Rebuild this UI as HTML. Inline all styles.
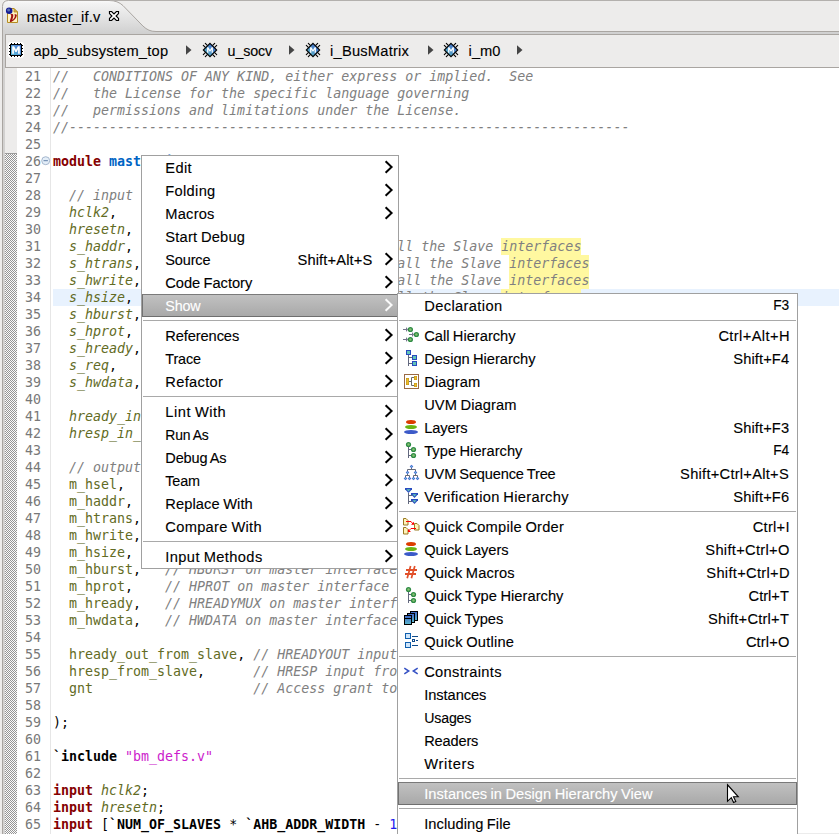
<!DOCTYPE html>
<html lang="en"><head><meta charset="utf-8"><title>master_if.v</title>
<style>
*{box-sizing:border-box}
html,body{margin:0;padding:0}
html,body{width:839px;height:834px;overflow:hidden}
#root{position:absolute;left:0;top:0;width:839px;height:834px;overflow:hidden;background:#edeceb}
body{background:#edeceb;font-family:"Liberation Sans","DejaVu Sans",sans-serif;font-size:14.667px;color:#111}
.t{position:absolute;word-spacing:-0.7px;line-height:20px;height:20px;white-space:pre;color:#000;-webkit-text-stroke:0.12px #000}
.t.w{color:#fff;-webkit-text-stroke:0.12px #fff}
#tabsvg{position:absolute;left:0;top:0}
#crumb{position:absolute;left:5px;top:34px;width:840px;height:34px;background:#edeceb;border:1px solid #a9a5a1;border-right:0}
#ed{position:absolute;left:0;top:68px;width:839px;height:766px;background:#fff;overflow:hidden}
#lb{position:absolute;left:0;top:30px;width:5px;height:810px;background:linear-gradient(90deg,#edeceb 0,#edeceb 2px,#a9a5a1 2px,#a9a5a1 3px,#d2d1d0 3px,#d2d1d0 5px)}
#ruler{position:absolute;left:5px;top:68px;width:12px;height:766px;background:#edeceb}
#hatch{position:absolute;left:5px;top:153px;width:12px;height:700px;border-top:1px solid #9c9c9c;background-image:repeating-conic-gradient(#fbfbfb 0% 25%,#959595 0% 50%);background-size:2px 2px;background-position:0 1px}
#vl{position:absolute;left:50px;top:68px;width:1px;height:766px;background:#e6e6e6}
.num,.ln{position:absolute;font-family:"DejaVu Sans Mono","Liberation Mono",monospace;font-size:13.314px;line-height:17px;height:17px;white-space:pre}
.num{left:17px;width:24px;text-align:right;color:#787878}
.ln{left:53px;color:#000}
.ln.cur{left:53px;width:800px;background:#e8f2fe}
.c{color:#808080;font-style:italic}
.h{background:#fff8a0;display:inline-block;height:17px;line-height:17px;vertical-align:top}
.k{color:#850000;font-weight:bold}
.n{color:#0064c4;font-weight:bold}
.i{color:#626b24;font-style:italic}
.o{color:#626b24}
.s{color:#cc1ccc}
.d{color:#000;font-weight:bold}
.u{color:#1c1cf0}
.menu{position:absolute;background:#fff;border:1px solid #a0a0a0}
#m1{left:141px;top:155px;width:258px;height:414px}
#m2{left:397px;top:293px;width:401px;height:560px}
.ar{position:absolute;left:242px}
.sel{position:absolute;left:0;right:0;height:23px;background:linear-gradient(#c1c1c1,#b6b6b6 45%,#a9a9a9);border:1px solid #727272;border-top-color:#7a7a7a;border-bottom-color:#6e6e6e}
.sep{position:absolute;left:1px;right:1px;height:1px;background:#a9a9a9}
.ic{position:absolute}
</style></head>
<body>
<div id="root">
<svg id="tabsvg" width="839" height="35" viewBox="0 0 839 35">
<defs><linearGradient id="tg" x1="0" y1="0" x2="0" y2="1"><stop offset="0" stop-color="#fbfbfb"/><stop offset="0.08" stop-color="#f3f3f3"/><stop offset="0.5" stop-color="#e3e3e3"/><stop offset="1" stop-color="#cecece"/></linearGradient></defs>
<rect x="0" y="0" width="839" height="35" fill="#edeceb"/>
<path d="M2.5 35 L2.5 6.5 Q2.5 0.5 8.5 0.5 L109 0.5 C115 0.5 119.5 2.3 123 5.6 L143 26.1 C147 29.8 150.5 31.5 156 31.5 L839 31.5 L839 34 L2.5 34 Z" fill="url(#tg)"/>
<path d="M2.5 35 L2.5 6.5 Q2.5 0.5 8.5 0.5 L109 0.5 C115 0.5 119.5 2.3 123 5.6 L143 26.1 C147 29.8 150.5 31.5 156 31.5 L839 31.5" fill="none" stroke="#aaa6a2" stroke-width="1"/>
<rect x="110" y="0" width="729" height="1" fill="#b3b0ad"/>
<rect x="3" y="34" width="836" height="1" fill="#a9a5a1"/>
</svg>
<div id="crumb"></div>
<div id="ed"></div>
<div id="lb"></div>
<div id="ruler"></div><div id="hatch"></div><div id="vl"></div>
<svg style="position:absolute;left:5px;top:6px" width="16" height="19" viewBox="0 0 16 19">
<path d="M2.500 2.500h6.500l3.500 3.500v10.500h-10z" fill="#fff3c0" stroke="#b48c22"/>
<path d="M9 2.500v3.500h3.500z" fill="#d8b050" stroke="#b48c22" stroke-width="0.800"/>
<path d="M5.400 8.400c1.500-0.700 2.900-0.300 2.900 1.100c0 1.500-0.700 3.200-1 4.600c1.300-1 2.400-2.600 2.600-4.200c0.100-0.600-0.200-1-0.800-1.200c1-0.900 2.800-0.600 2.700 0.900c-0.300 2.500-2.800 5.200-5.600 6.300c-1 0.300-1.500-0.100-1.300-1c0.400-1.800 1.300-3.700 1.300-5.200c0-0.600-0.300-1-0.800-1.300z" fill="#a01010"/>
<circle cx="4.200" cy="4.700" r="3.300" fill="#141c96"/><circle cx="3.600" cy="4.100" r="1.500" fill="#5a72b0"/>
</svg><svg style="position:absolute;left:108px;top:10px" width="12" height="12" viewBox="0 0 12 12">
<path d="M1.500 1.500H3.600L6 3.900L8.400 1.500H10.500V3.600L8.100 6L10.500 8.400V10.500H8.400L6 8.100L3.600 10.500H1.500V8.400L3.900 6L1.500 3.600Z" fill="#fff" stroke="#000" stroke-width="1.200" stroke-linejoin="miter"/></svg>
<svg style="position:absolute;left:8px;top:42px" width="16" height="16" viewBox="0 0 16 16">
<defs><linearGradient id="cg" x1="1" y1="0" x2="0" y2="1"><stop offset="0" stop-color="#4a72d0"/><stop offset="1" stop-color="#5cc0dc"/></linearGradient></defs>
<rect x="0" y="0" width="16" height="16" rx="3" fill="#fff"/>
<g stroke="#000" stroke-width="1"><path d="M3.500 1v14M6.500 1v14M9.500 1v14M12.500 1v14M1 3.500h14M1 6.500h14M1 9.500h14M1 12.500h14"/></g>
<rect x="2.500" y="2.500" width="11" height="11" fill="url(#cg)" stroke="#000"/>
<path d="M4.200 11.700v-7.400h1.900l1.900 3.500l1.900-3.500h1.900v7.400h-1.700v-4.500l-1.500 2.700h-1.200l-1.500-2.700v4.500z" fill="#fff"/>
</svg><svg style="position:absolute;left:185px;top:44px" width="8" height="12" viewBox="0 0 8 12"><path d="M1 1.300L6.500 6L1 10.700Z" fill="#454545"/></svg><svg style="position:absolute;left:202px;top:42px" width="16" height="16" viewBox="0 0 16 16">
<defs><linearGradient id="ig" x1="1" y1="0" x2="0" y2="1"><stop offset="0" stop-color="#3c5cc8"/><stop offset="1" stop-color="#62c4c8"/></linearGradient></defs>
<g stroke="#000" stroke-width="1.100" stroke-linecap="round"><path d="M3.300 1.300l2 2M1.300 3.300l2 2M12.700 1.300l-2 2M14.700 3.300l-2 2M3.300 14.700l2-2M1.300 12.700l2-2M12.700 14.700l-2-2M14.700 12.700l-2-2"/></g>
<path d="M8 1.300L14.700 8L8 14.700L1.300 8Z" fill="url(#ig)" stroke="#000" stroke-width="1.100"/>
<path d="M5.100 10.800v-5.500h1.300l1.600 2.800l1.600-2.800h1.300v5.500h-1.300v-3.300l-1.200 2.100h-0.800l-1.200-2.100v3.300z" fill="#fff"/>
</svg><svg style="position:absolute;left:288px;top:44px" width="8" height="12" viewBox="0 0 8 12"><path d="M1 1.300L6.500 6L1 10.700Z" fill="#454545"/></svg><svg style="position:absolute;left:305px;top:42px" width="16" height="16" viewBox="0 0 16 16">
<defs><linearGradient id="ig" x1="1" y1="0" x2="0" y2="1"><stop offset="0" stop-color="#3c5cc8"/><stop offset="1" stop-color="#62c4c8"/></linearGradient></defs>
<g stroke="#000" stroke-width="1.100" stroke-linecap="round"><path d="M3.300 1.300l2 2M1.300 3.300l2 2M12.700 1.300l-2 2M14.700 3.300l-2 2M3.300 14.700l2-2M1.300 12.700l2-2M12.700 14.700l-2-2M14.700 12.700l-2-2"/></g>
<path d="M8 1.300L14.700 8L8 14.700L1.300 8Z" fill="url(#ig)" stroke="#000" stroke-width="1.100"/>
<path d="M5.100 10.800v-5.500h1.300l1.600 2.800l1.600-2.800h1.300v5.500h-1.300v-3.300l-1.200 2.100h-0.800l-1.200-2.100v3.300z" fill="#fff"/>
</svg><svg style="position:absolute;left:427px;top:44px" width="8" height="12" viewBox="0 0 8 12"><path d="M1 1.300L6.500 6L1 10.700Z" fill="#454545"/></svg><svg style="position:absolute;left:443px;top:42px" width="16" height="16" viewBox="0 0 16 16">
<defs><linearGradient id="ig" x1="1" y1="0" x2="0" y2="1"><stop offset="0" stop-color="#3c5cc8"/><stop offset="1" stop-color="#62c4c8"/></linearGradient></defs>
<g stroke="#000" stroke-width="1.100" stroke-linecap="round"><path d="M3.300 1.300l2 2M1.300 3.300l2 2M12.700 1.300l-2 2M14.700 3.300l-2 2M3.300 14.700l2-2M1.300 12.700l2-2M12.700 14.700l-2-2M14.700 12.700l-2-2"/></g>
<path d="M8 1.300L14.700 8L8 14.700L1.300 8Z" fill="url(#ig)" stroke="#000" stroke-width="1.100"/>
<path d="M5.100 10.800v-5.500h1.300l1.600 2.800l1.600-2.800h1.300v5.500h-1.300v-3.300l-1.200 2.100h-0.800l-1.200-2.100v3.300z" fill="#fff"/>
</svg><svg style="position:absolute;left:516px;top:44px" width="8" height="12" viewBox="0 0 8 12"><path d="M1 1.300L6.500 6L1 10.700Z" fill="#454545"/></svg>
<span class="t" style="left:26.70px;top:7px;letter-spacing:0.206px">master_if.v</span><span class="t" style="left:33.40px;top:41px;letter-spacing:0.217px">apb_subsystem_top</span><span class="t" style="left:227.60px;top:41px;font-size:14.306px;letter-spacing:-0.150px">u_socv</span><span class="t" style="left:330.10px;top:41px;letter-spacing:0.217px">i_BusMatrix</span><span class="t" style="left:468.60px;top:41px;letter-spacing:0.028px">i_m0</span>
<div class="num" style="top:68px">21</div>
<div class="ln" style="top:68px"><span class="c">//   CONDITIONS OF ANY KIND, either express or implied.  See</span></div>
<div class="num" style="top:85px">22</div>
<div class="ln" style="top:85px"><span class="c">//   the License for the specific language governing</span></div>
<div class="num" style="top:102px">23</div>
<div class="ln" style="top:102px"><span class="c">//   permissions and limitations under the License.</span></div>
<div class="num" style="top:119px">24</div>
<div class="ln" style="top:119px"><span class="c">//----------------------------------------------------------------------</span></div>
<div class="num" style="top:136px">25</div>
<div class="ln" style="top:136px"></div>
<div class="num" style="top:153px">26</div>
<div class="ln" style="top:153px"><span class="k">module</span><span class="p"> </span><span class="n">master_if</span><span class="p"> (</span></div>
<div class="num" style="top:170px">27</div>
<div class="ln" style="top:170px"></div>
<div class="num" style="top:187px">28</div>
<div class="ln" style="top:187px"><span class="p">  </span><span class="c">// input</span></div>
<div class="num" style="top:204px">29</div>
<div class="ln" style="top:204px"><span class="p">  </span><span class="i">hclk2</span><span class="p">,</span></div>
<div class="num" style="top:221px">30</div>
<div class="ln" style="top:221px"><span class="p">  </span><span class="i">hresetn</span><span class="p">,</span></div>
<div class="num" style="top:238px">31</div>
<div class="ln" style="top:238px"><span class="p">  </span><span class="i">s_haddr</span><span class="p">,                                </span><span class="c">all the Slave </span><span class="c h">interfaces</span></div>
<div class="num" style="top:255px">32</div>
<div class="ln" style="top:255px"><span class="p">  </span><span class="i">s_htrans</span><span class="p">,                                </span><span class="c">all the Slave </span><span class="c h">interfaces</span></div>
<div class="num" style="top:272px">33</div>
<div class="ln" style="top:272px"><span class="p">  </span><span class="i">s_hwrite</span><span class="p">,                                </span><span class="c">all the Slave </span><span class="c h">interfaces</span></div>
<div class="num" style="top:289px">34</div>
<div class="ln cur" style="top:289px"><span class="p">  </span><span class="i">s_hsize</span><span class="p">,                                </span><span class="c">all the Slave </span><span class="c h">interfaces</span></div>
<div class="num" style="top:306px">35</div>
<div class="ln" style="top:306px"><span class="p">  </span><span class="i">s_hburst</span><span class="p">,</span></div>
<div class="num" style="top:323px">36</div>
<div class="ln" style="top:323px"><span class="p">  </span><span class="i">s_hprot</span><span class="p">,</span></div>
<div class="num" style="top:340px">37</div>
<div class="ln" style="top:340px"><span class="p">  </span><span class="i">s_hready</span><span class="p">,</span></div>
<div class="num" style="top:357px">38</div>
<div class="ln" style="top:357px"><span class="p">  </span><span class="i">s_req</span><span class="p">,</span></div>
<div class="num" style="top:374px">39</div>
<div class="ln" style="top:374px"><span class="p">  </span><span class="i">s_hwdata</span><span class="p">,</span></div>
<div class="num" style="top:391px">40</div>
<div class="ln" style="top:391px"></div>
<div class="num" style="top:408px">41</div>
<div class="ln" style="top:408px"><span class="p">  </span><span class="i">hready_in</span></div>
<div class="num" style="top:425px">42</div>
<div class="ln" style="top:425px"><span class="p">  </span><span class="i">hresp_in_</span></div>
<div class="num" style="top:442px">43</div>
<div class="ln" style="top:442px"></div>
<div class="num" style="top:459px">44</div>
<div class="ln" style="top:459px"><span class="p">  </span><span class="c">// output</span></div>
<div class="num" style="top:476px">45</div>
<div class="ln" style="top:476px"><span class="p">  </span><span class="o">m_hsel</span><span class="p">,</span></div>
<div class="num" style="top:493px">46</div>
<div class="ln" style="top:493px"><span class="p">  </span><span class="o">m_haddr</span><span class="p">,</span></div>
<div class="num" style="top:510px">47</div>
<div class="ln" style="top:510px"><span class="p">  </span><span class="o">m_htrans</span><span class="p">,</span></div>
<div class="num" style="top:527px">48</div>
<div class="ln" style="top:527px"><span class="p">  </span><span class="o">m_hwrite</span><span class="p">,</span></div>
<div class="num" style="top:544px">49</div>
<div class="ln" style="top:544px"><span class="p">  </span><span class="o">m_hsize</span><span class="p">,</span></div>
<div class="num" style="top:561px">50</div>
<div class="ln" style="top:561px"><span class="p">  </span><span class="o">m_hburst</span><span class="p">,   </span><span class="c">// HBURST on master interface</span></div>
<div class="num" style="top:578px">51</div>
<div class="ln" style="top:578px"><span class="p">  </span><span class="o">m_hprot</span><span class="p">,    </span><span class="c">// HPROT on master interface</span></div>
<div class="num" style="top:595px">52</div>
<div class="ln" style="top:595px"><span class="p">  </span><span class="o">m_hready</span><span class="p">,   </span><span class="c">// HREADYMUX on master interface</span></div>
<div class="num" style="top:612px">53</div>
<div class="ln" style="top:612px"><span class="p">  </span><span class="o">m_hwdata</span><span class="p">,   </span><span class="c">// HWDATA on master interface</span></div>
<div class="num" style="top:629px">54</div>
<div class="ln" style="top:629px"></div>
<div class="num" style="top:646px">55</div>
<div class="ln" style="top:646px"><span class="p">  </span><span class="o">hready_out_from_slave</span><span class="p">, </span><span class="c">// HREADYOUT input</span></div>
<div class="num" style="top:663px">56</div>
<div class="ln" style="top:663px"><span class="p">  </span><span class="o">hresp_from_slave</span><span class="p">,      </span><span class="c">// HRESP input from</span></div>
<div class="num" style="top:680px">57</div>
<div class="ln" style="top:680px"><span class="p">  </span><span class="o">gnt</span><span class="p">                    </span><span class="c">// Access grant to</span></div>
<div class="num" style="top:697px">58</div>
<div class="ln" style="top:697px"></div>
<div class="num" style="top:714px">59</div>
<div class="ln" style="top:714px"><span class="p">);</span></div>
<div class="num" style="top:731px">60</div>
<div class="ln" style="top:731px"></div>
<div class="num" style="top:748px">61</div>
<div class="ln" style="top:748px"><span class="d">`include</span><span class="p"> </span><span class="s">"bm_defs.v"</span></div>
<div class="num" style="top:765px">62</div>
<div class="ln" style="top:765px"></div>
<div class="num" style="top:782px">63</div>
<div class="ln" style="top:782px"><span class="k">input</span><span class="p"> </span><span class="i">hclk2</span><span class="p">;</span></div>
<div class="num" style="top:799px">64</div>
<div class="ln" style="top:799px"><span class="k">input</span><span class="p"> </span><span class="i">hresetn</span><span class="p">;</span></div>
<div class="num" style="top:816px">65</div>
<div class="ln" style="top:816px"><span class="k">input</span><span class="p"> [</span><span class="d">`NUM_OF_SLAVES</span><span class="p"> * </span><span class="d">`AHB_ADDR_WIDTH</span><span class="p"> - </span><span class="u">1</span></div>
<svg style="position:absolute;left:41px;top:156px" width="10" height="10" viewBox="0 0 10 10"><circle cx="4.700" cy="4.700" r="4" fill="#e4eef8" stroke="#9db0c8" stroke-width="0.900"/><path d="M2.500 4.700h4.400" stroke="#6080a8" stroke-width="1"/></svg>
<div class="menu" id="m1">
<span class="t" style="left:23.30px;top:2px;letter-spacing:0.339px">Edit</span>
<svg class="ar" style="top:4px" width="10" height="14" viewBox="0 0 10 14"><path d="M1.6 1.2 L7.6 7 L1.6 12.8" fill="none" stroke="#000" stroke-width="2"/></svg>
<span class="t" style="left:23.30px;top:25px;letter-spacing:0.314px">Folding</span>
<svg class="ar" style="top:27px" width="10" height="14" viewBox="0 0 10 14"><path d="M1.6 1.2 L7.6 7 L1.6 12.8" fill="none" stroke="#000" stroke-width="2"/></svg>
<span class="t" style="left:23.30px;top:48px;letter-spacing:0.216px">Macros</span>
<svg class="ar" style="top:50px" width="10" height="14" viewBox="0 0 10 14"><path d="M1.6 1.2 L7.6 7 L1.6 12.8" fill="none" stroke="#000" stroke-width="2"/></svg>
<span class="t" style="left:23.30px;top:71px;letter-spacing:0.214px">Start Debug</span>
<span class="t" style="left:23.30px;top:94px;font-size:14.529px;letter-spacing:-0.150px">Source</span>
<span class="t" style="left:155.50px;top:94px;letter-spacing:0.145px">Shift+Alt+S</span>
<svg class="ar" style="top:96px" width="10" height="14" viewBox="0 0 10 14"><path d="M1.6 1.2 L7.6 7 L1.6 12.8" fill="none" stroke="#000" stroke-width="2"/></svg>
<span class="t" style="left:23.30px;top:117px;letter-spacing:-0.031px">Code Factory</span>
<svg class="ar" style="top:119px" width="10" height="14" viewBox="0 0 10 14"><path d="M1.6 1.2 L7.6 7 L1.6 12.8" fill="none" stroke="#000" stroke-width="2"/></svg>
<div class="sel" style="top:138px"></div>
<span class="t w" style="left:23.30px;top:140px;font-size:14.340px;letter-spacing:-0.150px">Show</span>
<svg class="ar" style="top:142px" width="10" height="14" viewBox="0 0 10 14"><path d="M1.6 1.2 L7.6 7 L1.6 12.8" fill="none" stroke="#fafafa" stroke-width="2"/></svg>
<div class="sep" style="top:164px"></div>
<span class="t" style="left:23.30px;top:170px;letter-spacing:-0.113px">References</span>
<svg class="ar" style="top:172px" width="10" height="14" viewBox="0 0 10 14"><path d="M1.6 1.2 L7.6 7 L1.6 12.8" fill="none" stroke="#000" stroke-width="2"/></svg>
<span class="t" style="left:23.30px;top:193px;font-size:14.400px;letter-spacing:-0.150px">Trace</span>
<svg class="ar" style="top:195px" width="10" height="14" viewBox="0 0 10 14"><path d="M1.6 1.2 L7.6 7 L1.6 12.8" fill="none" stroke="#000" stroke-width="2"/></svg>
<span class="t" style="left:23.30px;top:216px;letter-spacing:0.327px">Refactor</span>
<svg class="ar" style="top:218px" width="10" height="14" viewBox="0 0 10 14"><path d="M1.6 1.2 L7.6 7 L1.6 12.8" fill="none" stroke="#000" stroke-width="2"/></svg>
<div class="sep" style="top:240px"></div>
<span class="t" style="left:23.30px;top:246px;letter-spacing:0.517px">Lint With</span>
<svg class="ar" style="top:248px" width="10" height="14" viewBox="0 0 10 14"><path d="M1.6 1.2 L7.6 7 L1.6 12.8" fill="none" stroke="#000" stroke-width="2"/></svg>
<span class="t" style="left:23.30px;top:269px;font-size:13.934px;letter-spacing:-0.150px">Run As</span>
<svg class="ar" style="top:271px" width="10" height="14" viewBox="0 0 10 14"><path d="M1.6 1.2 L7.6 7 L1.6 12.8" fill="none" stroke="#000" stroke-width="2"/></svg>
<span class="t" style="left:23.30px;top:292px;font-size:14.556px;letter-spacing:-0.150px">Debug As</span>
<svg class="ar" style="top:294px" width="10" height="14" viewBox="0 0 10 14"><path d="M1.6 1.2 L7.6 7 L1.6 12.8" fill="none" stroke="#000" stroke-width="2"/></svg>
<span class="t" style="left:23.30px;top:315px;font-size:14.428px;letter-spacing:-0.150px">Team</span>
<svg class="ar" style="top:317px" width="10" height="14" viewBox="0 0 10 14"><path d="M1.6 1.2 L7.6 7 L1.6 12.8" fill="none" stroke="#000" stroke-width="2"/></svg>
<span class="t" style="left:23.30px;top:338px;letter-spacing:0.090px">Replace With</span>
<svg class="ar" style="top:340px" width="10" height="14" viewBox="0 0 10 14"><path d="M1.6 1.2 L7.6 7 L1.6 12.8" fill="none" stroke="#000" stroke-width="2"/></svg>
<span class="t" style="left:23.30px;top:361px;letter-spacing:0.308px">Compare With</span>
<svg class="ar" style="top:363px" width="10" height="14" viewBox="0 0 10 14"><path d="M1.6 1.2 L7.6 7 L1.6 12.8" fill="none" stroke="#000" stroke-width="2"/></svg>
<div class="sep" style="top:385px"></div>
<span class="t" style="left:23.30px;top:391px;letter-spacing:0.395px">Input Methods</span>
<svg class="ar" style="top:393px" width="10" height="14" viewBox="0 0 10 14"><path d="M1.6 1.2 L7.6 7 L1.6 12.8" fill="none" stroke="#000" stroke-width="2"/></svg>
</div>
<div class="menu" id="m2">
<span class="t" style="left:26.20px;top:2px;letter-spacing:0.382px">Declaration</span>
<span class="t" style="left:375.16px;top:2px;font-size:13.745px;letter-spacing:-0.150px">F3</span>
<div class="sep" style="top:26px"></div>
<svg class="ic" style="left:0px;top:30px" width="24" height="23" viewBox="0 0 24 23"><g stroke="#74748a" stroke-width="1" fill="none"><path d="M5 5.500h4M11 10.500h4M5 15.500h4"/></g><path d="M8 3l2 2.500l-2 2.500zM14 8l2 2.500l-2 2.500zM8 13l2 2.500l-2 2.500z" fill="#74748a"/><circle cx="12.4" cy="5.5" r="2.6" fill="#2e8b45"/><circle cx="12.4" cy="5.5" r="1.2" fill="#86c070"/><circle cx="18.4" cy="10.5" r="2.6" fill="#2e8b45"/><circle cx="18.4" cy="10.5" r="1.2" fill="#86c070"/><circle cx="12.4" cy="15.5" r="2.6" fill="#2e8b45"/><circle cx="12.4" cy="15.5" r="1.2" fill="#86c070"/></svg>
<span class="t" style="left:26.20px;top:32px;letter-spacing:0.007px">Call Hierarchy</span>
<span class="t" style="left:320.40px;top:32px;letter-spacing:0.387px">Ctrl+Alt+H</span>
<svg class="ic" style="left:0px;top:53px" width="24" height="23" viewBox="0 0 24 23"><g stroke="#62687e" stroke-width="1" fill="none"><path d="M10.5 8v11M10.5 10.5h4M10.5 16.5h4"/></g><rect x="8" y="3" width="5" height="5" fill="#2a4bc0"/><rect x="9" y="4" width="3" height="3" fill="#60c4b6"/><rect x="14" y="8" width="5" height="5" fill="#2a4bc0"/><rect x="15" y="9" width="3" height="3" fill="#60c4b6"/><rect x="14" y="14" width="5" height="5" fill="#2a4bc0"/><rect x="15" y="15" width="3" height="3" fill="#60c4b6"/></svg>
<span class="t" style="left:26.20px;top:55px;letter-spacing:-0.025px">Design Hierarchy</span>
<span class="t" style="left:335.30px;top:55px;letter-spacing:0.109px">Shift+F4</span>
<svg class="ic" style="left:0px;top:76px" width="24" height="23" viewBox="0 0 24 23"><rect x="6.5" y="4.5" width="14" height="14" fill="#fff" stroke="#9a6a44"/><g stroke="#6a6a6a" fill="none"><path d="M11 11.5h3M13.5 7.5v8M13.5 7.5h3M13.5 15.5h3"/></g><g fill="#f0bc28" stroke="#c89a10" stroke-width="0.8"><rect x="8.4" y="8.4" width="2.2" height="6.2"/><rect x="16.4" y="6.4" width="2.2" height="3.2"/><rect x="16.4" y="13.4" width="2.2" height="3.2"/></g></svg>
<span class="t" style="left:26.20px;top:78px;letter-spacing:0.121px">Diagram</span>
<span class="t" style="left:26.20px;top:101px;letter-spacing:0.098px">UVM Diagram</span>
<svg class="ic" style="left:0px;top:122px" width="24" height="23" viewBox="0 0 24 23"><ellipse cx="13" cy="6" rx="5" ry="2" fill="#dc3c00"/><ellipse cx="13" cy="11" rx="6" ry="2" fill="#6ab414"/><ellipse cx="13" cy="16" rx="7" ry="2" fill="#3c5ac8"/></svg>
<span class="t" style="left:26.20px;top:124px;letter-spacing:-0.132px">Layers</span>
<span class="t" style="left:335.30px;top:124px;letter-spacing:0.109px">Shift+F3</span>
<svg class="ic" style="left:0px;top:145px" width="24" height="23" viewBox="0 0 24 23"><g stroke="#62687e" stroke-width="1" fill="none"><path d="M10.5 7v12M10.5 10.5h3M10.5 16.5h3"/></g><circle cx="10.5" cy="5.5" r="2.6" fill="#2e8b45"/><circle cx="10.5" cy="5.5" r="1.2" fill="#86c070"/><circle cx="15.5" cy="10.5" r="2.6" fill="#2e8b45"/><circle cx="15.5" cy="10.5" r="1.2" fill="#86c070"/><circle cx="15.5" cy="16.5" r="2.6" fill="#2e8b45"/><circle cx="15.5" cy="16.5" r="1.2" fill="#86c070"/></svg>
<span class="t" style="left:26.20px;top:147px;letter-spacing:0.029px">Type Hierarchy</span>
<span class="t" style="left:375.16px;top:147px;font-size:13.745px;letter-spacing:-0.150px">F4</span>
<svg class="ic" style="left:0px;top:168px" width="24" height="23" viewBox="0 0 24 23"><g stroke="#666a78" stroke-width="1" fill="none"><path d="M13.5 6v2M9.5 7.5h8M9.5 7.5v2M17.5 7.5v2M9.5 12v2M17.5 12v2M7.5 13.5h4M15.5 13.5h4M7.5 13.5v2M11.5 13.5v2M15.5 13.5v2M19.5 13.5v2"/></g><path d="M13.5 2.7 l1.8 1.8 l-1.8 1.8 l-1.8 -1.8z" fill="#4a68d8"/><rect x="13.0" y="4.0" width="1" height="1" fill="#5fd0c0"/><path d="M9.5 8.7 l1.8 1.8 l-1.8 1.8 l-1.8 -1.8z" fill="#4a68d8"/><rect x="9.0" y="10.0" width="1" height="1" fill="#5fd0c0"/><path d="M17.5 8.7 l1.8 1.8 l-1.8 1.8 l-1.8 -1.8z" fill="#4a68d8"/><rect x="17.0" y="10.0" width="1" height="1" fill="#5fd0c0"/><path d="M7.5 14.7 l1.8 1.8 l-1.8 1.8 l-1.8 -1.8z" fill="#4a68d8"/><rect x="7.0" y="16.0" width="1" height="1" fill="#5fd0c0"/><path d="M11.5 14.7 l1.8 1.8 l-1.8 1.8 l-1.8 -1.8z" fill="#4a68d8"/><rect x="11.0" y="16.0" width="1" height="1" fill="#5fd0c0"/><path d="M15.5 14.7 l1.8 1.8 l-1.8 1.8 l-1.8 -1.8z" fill="#4a68d8"/><rect x="15.0" y="16.0" width="1" height="1" fill="#5fd0c0"/><path d="M19.5 14.7 l1.8 1.8 l-1.8 1.8 l-1.8 -1.8z" fill="#4a68d8"/><rect x="19.0" y="16.0" width="1" height="1" fill="#5fd0c0"/></svg>
<span class="t" style="left:26.20px;top:170px;font-size:14.596px;letter-spacing:-0.150px">UVM Sequence Tree</span>
<span class="t" style="left:282.10px;top:170px;letter-spacing:0.260px">Shift+Ctrl+Alt+S</span>
<svg class="ic" style="left:0px;top:191px" width="24" height="23" viewBox="0 0 24 23"><g stroke="#62687e" stroke-width="1" fill="none"><path d="M10.5 8v11M10.5 10.5h4M10.5 16.5h4"/></g><path d="M7 3 h7 v1.2 l-3.5 3.8 l-3.5 -3.8z" fill="#2a4bc0"/><path d="M8.5 4.2 h4 l-2 2.2z" fill="#60c4b6"/><path d="M13 8 h7 v1.2 l-3.5 3.8 l-3.5 -3.8z" fill="#2a4bc0"/><path d="M14.5 9.2 h4 l-2 2.2z" fill="#60c4b6"/><path d="M13 14 h7 v1.2 l-3.5 3.8 l-3.5 -3.8z" fill="#2a4bc0"/><path d="M14.5 15.2 h4 l-2 2.2z" fill="#60c4b6"/></svg>
<span class="t" style="left:26.20px;top:193px;letter-spacing:0.312px">Verification Hierarchy</span>
<span class="t" style="left:335.30px;top:193px;letter-spacing:0.109px">Shift+F6</span>
<div class="sep" style="top:217px"></div>
<svg class="ic" style="left:0px;top:221px" width="24" height="23" viewBox="0 0 24 23"><path d="M5.5 3.5 h2.5 l2 2 v4.5 h-4.5z" fill="#fff2b8" stroke="#9a7a22" stroke-width="1"/><path d="M16.5 8.5 h2.5 l2 2 v4.5 h-4.5z" fill="#fff2b8" stroke="#9a7a22" stroke-width="1"/><path d="M5.5 12.5 h2.5 l2 2 v4.5 h-4.5z" fill="#fff2b8" stroke="#9a7a22" stroke-width="1"/><g stroke="#ff0000" stroke-width="1" fill="none"><path d="M8 6.5h5l2 2.5M18 13.5h-5l-2.5 2.5"/></g><path d="M13 9.8h3v-3z M10 14v3h3z" fill="#ff0000"/></svg>
<span class="t" style="left:26.20px;top:223px;letter-spacing:0.231px">Quick Compile Order</span>
<span class="t" style="left:354.70px;top:223px;letter-spacing:0.270px">Ctrl+I</span>
<svg class="ic" style="left:0px;top:244px" width="24" height="23" viewBox="0 0 24 23"><ellipse cx="13" cy="6" rx="5" ry="2" fill="#dc3c00"/><ellipse cx="13" cy="11" rx="6" ry="2" fill="#6ab414"/><ellipse cx="13" cy="16" rx="7" ry="2" fill="#3c5ac8"/></svg>
<span class="t" style="left:26.20px;top:246px;letter-spacing:-0.036px">Quick Layers</span>
<span class="t" style="left:307.30px;top:246px;letter-spacing:0.306px">Shift+Ctrl+O</span>
<svg class="ic" style="left:0px;top:267px" width="24" height="23" viewBox="0 0 24 23"><g stroke="#e2502a" fill="none"><path d="M8 9h11M7 13h11" stroke-width="2"/><path d="M12.6 5L9.2 17.2M16.8 5L13.4 17.2" stroke-width="1.7"/></g></svg>
<span class="t" style="left:26.20px;top:269px;letter-spacing:0.140px">Quick Macros</span>
<span class="t" style="left:308.30px;top:269px;letter-spacing:0.306px">Shift+Ctrl+D</span>
<svg class="ic" style="left:0px;top:290px" width="24" height="23" viewBox="0 0 24 23"><g stroke="#62687e" stroke-width="1" fill="none"><path d="M10.5 7v12M10.5 10.5h3M10.5 16.5h3"/></g><circle cx="10.5" cy="5.5" r="2.6" fill="#2e8b45"/><circle cx="10.5" cy="5.5" r="1.2" fill="#86c070"/><circle cx="15.5" cy="10.5" r="2.6" fill="#2e8b45"/><circle cx="15.5" cy="10.5" r="1.2" fill="#86c070"/><circle cx="15.5" cy="16.5" r="2.6" fill="#2e8b45"/><circle cx="15.5" cy="16.5" r="1.2" fill="#86c070"/></svg>
<span class="t" style="left:26.20px;top:292px;letter-spacing:0.044px">Quick Type Hierarchy</span>
<span class="t" style="left:350.60px;top:292px;letter-spacing:-0.010px">Ctrl+T</span>
<svg class="ic" style="left:0px;top:313px" width="24" height="23" viewBox="0 0 24 23"><defs><linearGradient id="tb" x1="0" y1="0" x2="0" y2="1"><stop offset="0" stop-color="#3f64c4"/><stop offset="1" stop-color="#5ab8cc"/></linearGradient></defs><g stroke="#000" stroke-width="1" fill="url(#tb)"><rect x="12.5" y="4.5" width="7" height="9"/><rect x="9.5" y="6.5" width="7" height="9"/><rect x="6.5" y="8.5" width="7" height="9"/><path d="M6.5 11.5h7"/></g></svg>
<span class="t" style="left:26.20px;top:315px;letter-spacing:-0.061px">Quick Types</span>
<span class="t" style="left:310.10px;top:315px;letter-spacing:0.233px">Shift+Ctrl+T</span>
<svg class="ic" style="left:0px;top:336px" width="24" height="23" viewBox="0 0 24 23"><g stroke="#0f5fae" stroke-width="1" fill="#cfe6fb"><rect x="7.5" y="3.5" width="5" height="5"/><rect x="7.5" y="12.5" width="5" height="5"/></g><rect x="14" y="9" width="3" height="3" fill="#0e4a8a"/><rect x="15" y="10" width="1" height="1" fill="#fff"/><g stroke="#0e4a8a" stroke-width="1"><path d="M14 6.5h6M18 10.5h2M14 15.5h6"/></g></svg>
<span class="t" style="left:26.20px;top:338px;letter-spacing:0.206px">Quick Outline</span>
<span class="t" style="left:347.90px;top:338px;letter-spacing:0.130px">Ctrl+O</span>
<div class="sep" style="top:362px"></div>
<svg class="ic" style="left:0px;top:366px" width="24" height="23" viewBox="0 0 24 23"><g stroke="#3652c4" stroke-width="1.500" fill="none"><path d="M6.300 8.200L10.700 11L6.300 13.800M19.700 8.200L15.300 11L19.700 13.800"/></g></svg>
<span class="t" style="left:26.20px;top:368px;letter-spacing:0.320px">Constraints</span>
<span class="t" style="left:26.20px;top:391px;letter-spacing:-0.063px">Instances</span>
<span class="t" style="left:26.20px;top:414px;font-size:14.157px;letter-spacing:-0.150px">Usages</span>
<span class="t" style="left:26.20px;top:437px;font-size:14.595px;letter-spacing:-0.150px">Readers</span>
<span class="t" style="left:26.20px;top:460px;letter-spacing:0.682px">Writers</span>
<div class="sep" style="top:484px"></div>
<div class="sel" style="top:488px"></div>
<span class="t w" style="left:26.20px;top:490px;letter-spacing:0.028px">Instances in Design Hierarchy View</span>
<div class="sep" style="top:514px"></div>
<span class="t" style="left:26.20px;top:520px;letter-spacing:0.061px">Including File</span>
</div>
<div style="position:absolute;left:798px;top:833px;width:41px;height:1px;background:#ececec"></div>
<svg style="position:absolute;left:726px;top:783px" width="14" height="21" viewBox="0 0 14 21"><path d="M1.500 1.800V18.300L5.300 14.700L7.600 19.600L9.800 18.600L7.500 13.800H12.300Z" fill="#fff" stroke="#000" stroke-width="1.100" stroke-linejoin="miter"/></svg>
</div>
</body></html>
